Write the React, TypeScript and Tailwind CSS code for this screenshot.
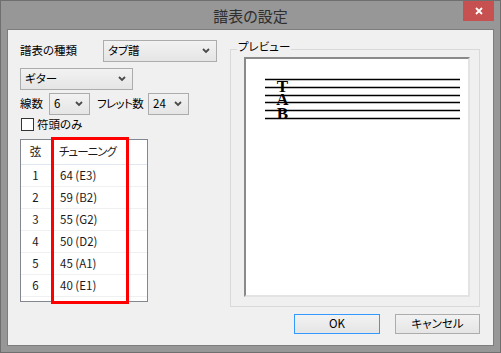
import React from 'react';

const tuning = [
  { n: 1, v: '64 (E3)' },
  { n: 2, v: '59 (B2)' },
  { n: 3, v: '55 (G2)' },
  { n: 4, v: '50 (D2)' },
  { n: 5, v: '45 (A1)' },
  { n: 6, v: '40 (E1)' },
];

const Chevron = () => (
  <svg width="8" height="6" viewBox="0 0 8 6" className="shrink-0">
    <polyline points="1,1 4,4 7,1" fill="none" stroke="#4a4a4a" strokeWidth="1.8" />
  </svg>
);

const Combo: React.FC<{ value: string; className: string }> = ({ value, className }) => (
  <div
    className={`h-[22px] shrink-0 flex items-center justify-between pl-[4px] pr-[6px] border border-[#acacac] bg-gradient-to-b from-[#f2f2f2] to-[#e5e5e5] ${className}`}
  >
    <span className="leading-none whitespace-nowrap">{value}</span>
    <Chevron />
  </div>
);

const StaffPreview = () => {
  const ys = [79.5, 87.5, 95.5, 102.5, 110.5, 118.5];
  return (
    <svg width="222" height="236" viewBox="246 59 222 236" className="block">
      {ys.map((y) => (
        <line key={y} x1="265" x2="460" y1={y} y2={y} stroke="#000" strokeWidth="1.3" />
      ))}
      <text fontFamily="'Liberation Serif', serif" fontWeight="bold" fontSize="17" textAnchor="middle" fill="#000">
        <tspan x="282.5" y="91.5">T</tspan>
        <tspan x="282.5" y="104.5">A</tspan>
        <tspan x="282.5" y="118.5">B</tspan>
      </text>
    </svg>
  );
};

export default function App() {
  return (
    <div className="w-[501px] h-[353px] bg-[#979797] border border-[#6f6f6f] flex flex-col font-['Noto_Sans_CJK_JP',sans-serif] [font-feature-settings:'palt'] text-[11.5px] text-black">
      {/* title bar */}
      <div className="relative h-[28px] flex items-center justify-center">
        <span className="text-[15px] text-[#2e2e2e] leading-none">譜表の設定</span>
        <div className="absolute right-[6px] top-0 w-[31px] h-[20px] bg-[#c75050] flex items-center justify-center">
          <svg width="8" height="8" viewBox="0 0 8 8">
            <path d="M1 1 L7 7 M7 1 L1 7" stroke="#fff" strokeWidth="1.8" />
          </svg>
        </div>
      </div>

      {/* client area */}
      <div className="mx-[6px] h-[317px] border border-[#7d7d7d] bg-[#f0f0f0] flex flex-col pt-[10px] px-[12px]">
        <div className="flex items-start">
          {/* left column */}
          <div className="w-[197px] shrink-0 flex flex-col">
            <div className="h-[22px] flex items-center">
              <span className="w-[83px] shrink-0 whitespace-nowrap">譜表の種類</span>
              <Combo value="タブ譜" className="w-[114px]" />
            </div>
            <Combo value="ギター" className="w-[113px] mt-[6px]" />
            <div className="h-[22px] mt-[3px] flex items-center">
              <span className="w-[29px] shrink-0 whitespace-nowrap">線数</span>
              <Combo value="6" className="w-[41px]" />
              <span className="w-[51px] shrink-0 ml-[7px] whitespace-nowrap tracking-[-0.6px]">フレット数</span>
              <Combo value="24" className="w-[41px]" />
            </div>
            <div className="h-[13px] mt-[3px] flex items-center">
              <div className="ml-[1px] w-[13px] h-[13px] border border-[#333] bg-white" />
              <span className="ml-[3px] leading-none">符頭のみ</span>
            </div>
            <div className="relative mt-[8px] w-[128px] h-[163px] border border-[#828790] bg-white text-[#1a1a1a]">
              <div className="h-[25px] flex items-center border-b border-[#dfe8f1]">
                <span className="w-[29px] text-center">弦</span>
                <span className="pl-[9px] whitespace-nowrap tracking-[-1px]">チューニング</span>
              </div>
              {tuning.map((r) => (
                <div key={r.n} className="h-[22px] flex items-center border-b border-[#f0f0f0]">
                  <span className="w-[29px] text-center">{r.n}</span>
                  <span className="pl-[10px]">{r.v}</span>
                </div>
              ))}
              <div className="absolute left-[30px] top-[-3px] w-[78px] h-[167px] border-[3px] border-[#ff0000]" />
            </div>
          </div>

          {/* preview group */}
          <div className="relative ml-[13px] mt-[9px] w-[250px] h-[258px] border border-[#d9d9d9] pl-[13px] pt-[7px]">
            <span className="absolute left-[6px] top-[-9px] px-[1px] bg-[#f0f0f0] leading-none">プレビュー</span>
            <div className="w-[226px] h-[240px] bg-white border-2 border-t-[#8a8a8a] border-l-[#8a8a8a] border-r-[#e3e3e3] border-b-[#e3e3e3]">
              <StaffPreview />
            </div>
          </div>
        </div>

        {/* buttons */}
        <div className="mt-[7px] flex justify-end gap-[15px] mr-[1px]">
          <div className="w-[86px] h-[20px] border border-[#3399ff] bg-gradient-to-b from-[#f2f2f2] to-[#e5e5e5] flex items-center justify-center">
            OK
          </div>
          <div className="w-[85px] h-[20px] border border-[#acacac] bg-gradient-to-b from-[#f2f2f2] to-[#e5e5e5] flex items-center justify-center">
            キャンセル
          </div>
        </div>
      </div>
    </div>
  );
}
